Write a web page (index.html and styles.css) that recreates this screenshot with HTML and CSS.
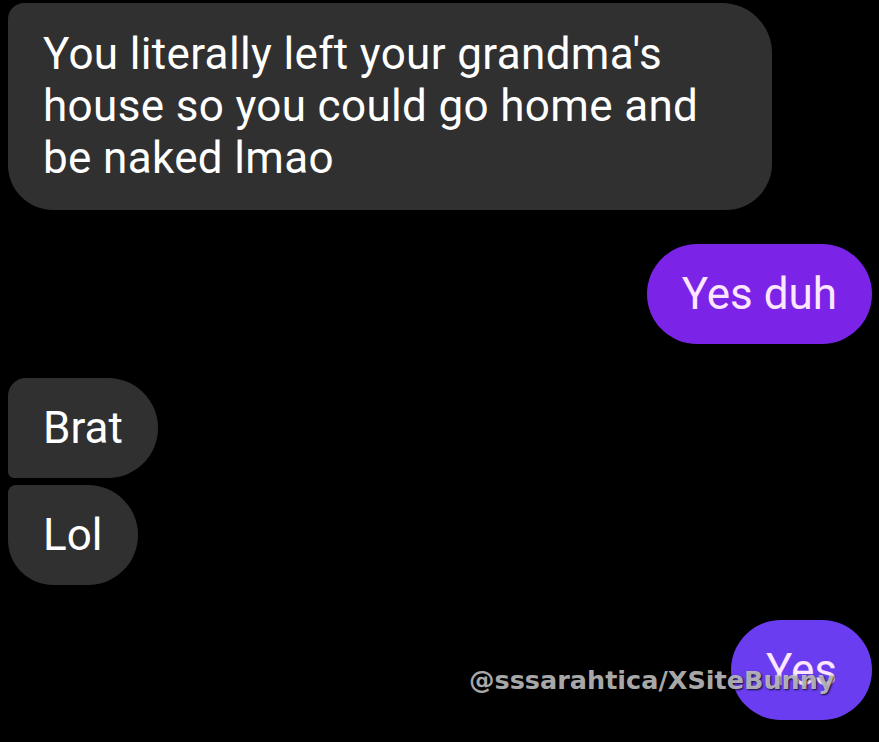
FILE: index.html
```html
<!DOCTYPE html>
<html lang="en">
<head>
    <meta charset="UTF-8">
    <meta name="viewport" content="width=device-width, initial-scale=1.0">
    <title>Chat</title>
    <link rel="stylesheet" href="styles.css">
</head>
<body>
<div class="chat">
    <div class="msg in first wide">You literally left your grandma's house so you could go home and be naked lmao</div>
    <div class="msg out">Yes duh</div>
    <div class="msg in first">Brat</div>
    <div class="msg in last">Lol</div>
    <div class="msg out alt">Yes</div>
</div>
<div class="watermark">@sssarahtica/XSiteBunny</div>
</body>
</html>
```
FILE: styles.css
```css
body {
    margin: 0;
    background: #000;
    font-family: Roboto, "Noto Sans", sans-serif;
    width: 879px;
    height: 742px;
    overflow: hidden;
    position: relative;
}
.chat {
    display: flex;
    flex-direction: column;
    padding: 3px 7px 0 8px;
}
.msg {
    font-size: 44px;
    line-height: 52px;
    padding: 24px 35px;
    color: #fff;
    border-radius: 50px;
}
.in {
    align-self: flex-start;
    background: #303030;
    border-radius: 18px 50px 50px 6px;
}
.in.last {
    border-radius: 8px 50px 50px 45px;
    margin-top: 7px;
}
.in.wide {
    width: 694px;
    padding: 25px 35px 26px;
    letter-spacing: 0.35px;
    border-radius: 16px 50px 46px 45px;
}
.out {
    align-self: flex-end;
    background: #7b24e8;
    color: #fde6ff;
    margin: 34px 0;
}
.out.alt {
    background: #6a3ef0;
    margin: 35px 0 0;
}
.watermark {
    position: absolute;
    left: 469px;
    top: 665px;
    font-family: "DejaVu Sans", sans-serif;
    font-weight: bold;
    font-size: 25.5px;
    line-height: 30px;
    color: rgba(200, 200, 200, 0.85);
    text-shadow: 1px 1px 2px rgba(0, 0, 0, 0.8);
}
```
